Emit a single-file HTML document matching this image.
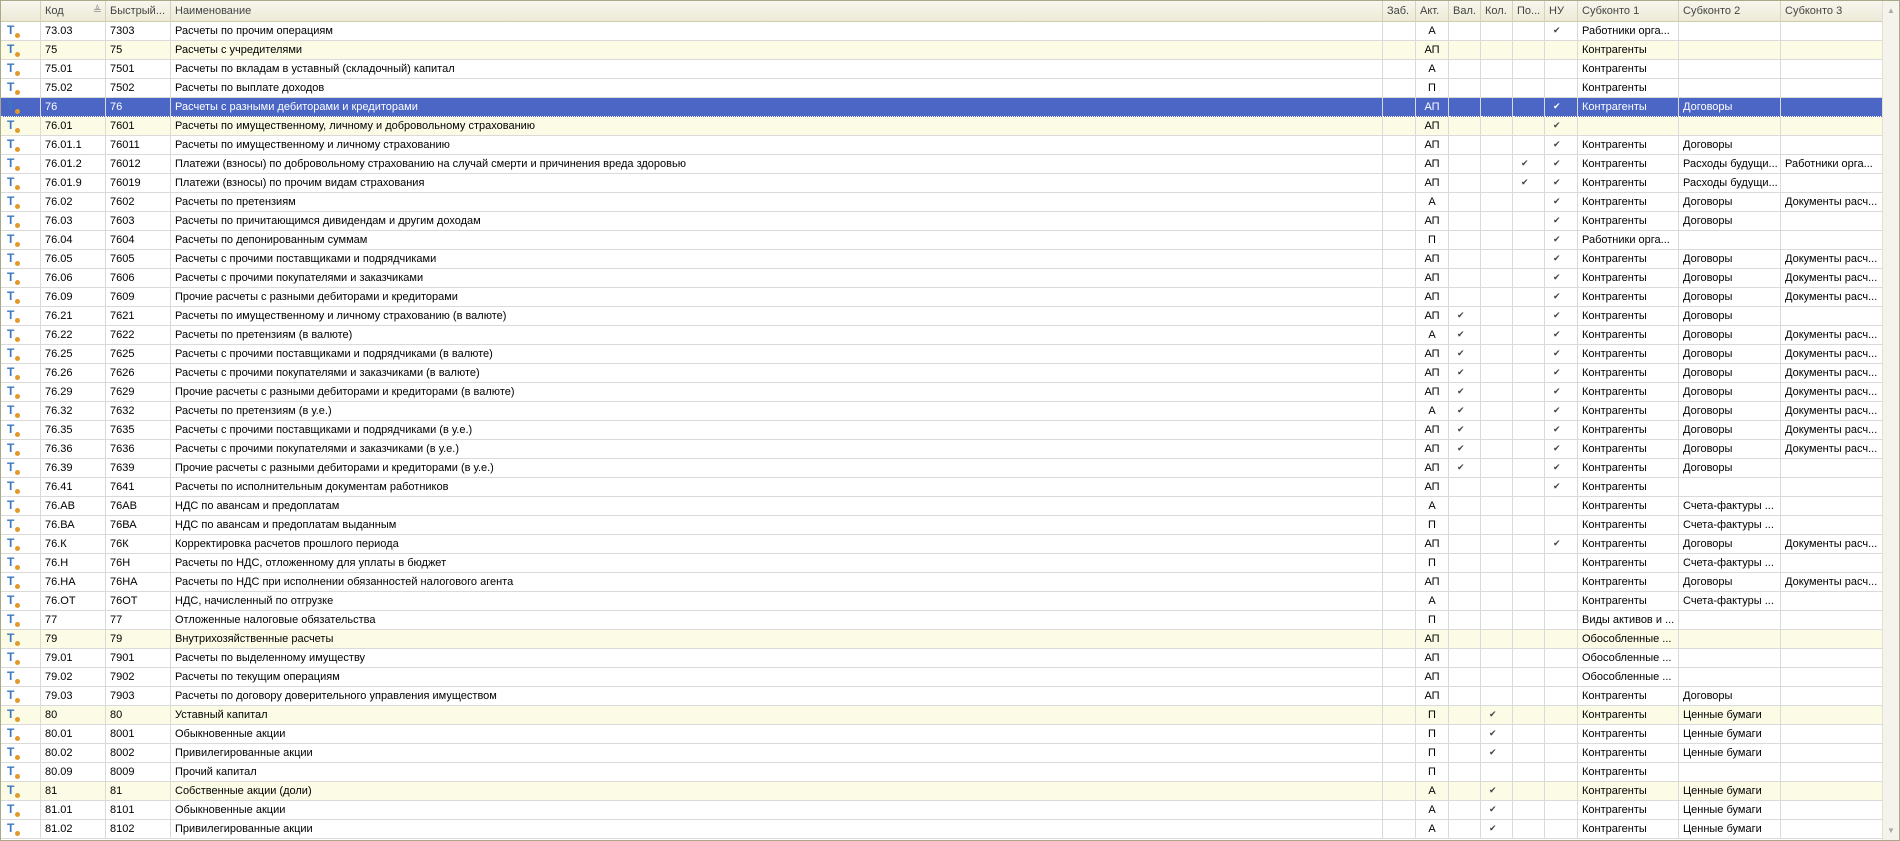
<!DOCTYPE html>
<html><head><meta charset="utf-8"><style>
html,body{margin:0;padding:0;width:1900px;height:841px;overflow:hidden;background:#fff;font-family:"Liberation Sans","DejaVu Sans",sans-serif;font-size:11px;color:#000}
.wrap{position:absolute;left:0;top:0;width:1900px;height:841px;border:1px solid #a9a98a;box-sizing:border-box;overflow:hidden}
table{border-collapse:separate;border-spacing:0;table-layout:fixed;position:absolute;left:0;top:0;width:1881px}
td,th{height:19px;border-right:1px solid #dadada;border-bottom:1px solid #dadada;padding:0 0 0 4px;white-space:nowrap;overflow:hidden;text-align:left;font-weight:normal;box-sizing:border-box;line-height:17px}
th{height:21px;line-height:20px;background:linear-gradient(#f8f7ee,#ece9d6);color:#444;border-right:1px solid #d6d2bc;border-bottom:1px solid #cfcbb3}
tr.y td{background:#fbfbe6}
tr.s td{background:#4b66c4;color:#fff;border-bottom:1px dotted #fff}
td.c{text-align:center;padding:0}
td.k{padding-left:8px;font-family:"DejaVu Sans",sans-serif;font-size:9px;color:#444}
tr.s td.k{color:#fff}
.i{position:relative;display:inline-block;width:14px;height:14px;vertical-align:middle}
.i b{position:absolute;left:0;top:-1px;font:bold 12px "Liberation Sans",sans-serif;color:#3b78c0;line-height:14px}
.i i{position:absolute;left:8px;top:9px;width:5px;height:5px;border-radius:50%;background:#e09a2a}
td.ic{padding-left:6px}
.sb{position:absolute;left:1881px;top:0;width:17px;height:839px;background:#f4f3ec;border-left:1px solid #e2e0d4}
.sb .u,.sb .d{position:absolute;left:4px;font-size:8px;color:#aaa}
</style></head><body><div class="wrap">
<table>
<colgroup><col style="width:40px"><col style="width:65px"><col style="width:65px"><col style="width:1212px"><col style="width:33px"><col style="width:33px"><col style="width:32px"><col style="width:32px"><col style="width:32px"><col style="width:33px"><col style="width:101px"><col style="width:102px"><col style="width:102px"></colgroup>
<tr><th></th><th>Код <span style="margin-left:26px;color:#999">≜</span></th><th>Быстрый...</th><th>Наименование</th><th>Заб.</th><th>Акт.</th><th>Вал.</th><th>Кол.</th><th>По...</th><th>НУ</th><th>Субконто 1</th><th>Субконто 2</th><th>Субконто 3</th></tr>
<tr><td class="ic"><span class="i"><b>T</b><i></i></span></td><td>73.03</td><td>7303</td><td>Расчеты по прочим операциям</td><td></td><td class="c">А</td><td></td><td></td><td></td><td class="k">✔</td><td>Работники орга...</td><td></td><td></td></tr>
<tr class="y"><td class="ic"><span class="i"><b>T</b><i></i></span></td><td>75</td><td>75</td><td>Расчеты с учредителями</td><td></td><td class="c">АП</td><td></td><td></td><td></td><td></td><td>Контрагенты</td><td></td><td></td></tr>
<tr><td class="ic"><span class="i"><b>T</b><i></i></span></td><td>75.01</td><td>7501</td><td>Расчеты по вкладам в уставный (складочный) капитал</td><td></td><td class="c">А</td><td></td><td></td><td></td><td></td><td>Контрагенты</td><td></td><td></td></tr>
<tr><td class="ic"><span class="i"><b>T</b><i></i></span></td><td>75.02</td><td>7502</td><td>Расчеты по выплате доходов</td><td></td><td class="c">П</td><td></td><td></td><td></td><td></td><td>Контрагенты</td><td></td><td></td></tr>
<tr class="s"><td class="ic"><span class="i"><b>T</b><i></i></span></td><td>76</td><td>76</td><td>Расчеты с разными дебиторами и кредиторами</td><td></td><td class="c">АП</td><td></td><td></td><td></td><td class="k">✔</td><td>Контрагенты</td><td>Договоры</td><td></td></tr>
<tr class="y"><td class="ic"><span class="i"><b>T</b><i></i></span></td><td>76.01</td><td>7601</td><td>Расчеты по имущественному, личному и добровольному страхованию</td><td></td><td class="c">АП</td><td></td><td></td><td></td><td class="k">✔</td><td></td><td></td><td></td></tr>
<tr><td class="ic"><span class="i"><b>T</b><i></i></span></td><td>76.01.1</td><td>76011</td><td>Расчеты по имущественному и личному страхованию</td><td></td><td class="c">АП</td><td></td><td></td><td></td><td class="k">✔</td><td>Контрагенты</td><td>Договоры</td><td></td></tr>
<tr><td class="ic"><span class="i"><b>T</b><i></i></span></td><td>76.01.2</td><td>76012</td><td>Платежи (взносы) по добровольному страхованию на случай смерти и причинения вреда здоровью</td><td></td><td class="c">АП</td><td></td><td></td><td class="k">✔</td><td class="k">✔</td><td>Контрагенты</td><td>Расходы будущи...</td><td>Работники орга...</td></tr>
<tr><td class="ic"><span class="i"><b>T</b><i></i></span></td><td>76.01.9</td><td>76019</td><td>Платежи (взносы) по прочим видам страхования</td><td></td><td class="c">АП</td><td></td><td></td><td class="k">✔</td><td class="k">✔</td><td>Контрагенты</td><td>Расходы будущи...</td><td></td></tr>
<tr><td class="ic"><span class="i"><b>T</b><i></i></span></td><td>76.02</td><td>7602</td><td>Расчеты по претензиям</td><td></td><td class="c">А</td><td></td><td></td><td></td><td class="k">✔</td><td>Контрагенты</td><td>Договоры</td><td>Документы расч...</td></tr>
<tr><td class="ic"><span class="i"><b>T</b><i></i></span></td><td>76.03</td><td>7603</td><td>Расчеты по причитающимся дивидендам и другим доходам</td><td></td><td class="c">АП</td><td></td><td></td><td></td><td class="k">✔</td><td>Контрагенты</td><td>Договоры</td><td></td></tr>
<tr><td class="ic"><span class="i"><b>T</b><i></i></span></td><td>76.04</td><td>7604</td><td>Расчеты по депонированным суммам</td><td></td><td class="c">П</td><td></td><td></td><td></td><td class="k">✔</td><td>Работники орга...</td><td></td><td></td></tr>
<tr><td class="ic"><span class="i"><b>T</b><i></i></span></td><td>76.05</td><td>7605</td><td>Расчеты с прочими поставщиками и подрядчиками</td><td></td><td class="c">АП</td><td></td><td></td><td></td><td class="k">✔</td><td>Контрагенты</td><td>Договоры</td><td>Документы расч...</td></tr>
<tr><td class="ic"><span class="i"><b>T</b><i></i></span></td><td>76.06</td><td>7606</td><td>Расчеты с прочими покупателями и заказчиками</td><td></td><td class="c">АП</td><td></td><td></td><td></td><td class="k">✔</td><td>Контрагенты</td><td>Договоры</td><td>Документы расч...</td></tr>
<tr><td class="ic"><span class="i"><b>T</b><i></i></span></td><td>76.09</td><td>7609</td><td>Прочие расчеты с разными дебиторами и кредиторами</td><td></td><td class="c">АП</td><td></td><td></td><td></td><td class="k">✔</td><td>Контрагенты</td><td>Договоры</td><td>Документы расч...</td></tr>
<tr><td class="ic"><span class="i"><b>T</b><i></i></span></td><td>76.21</td><td>7621</td><td>Расчеты по имущественному и личному страхованию (в валюте)</td><td></td><td class="c">АП</td><td class="k">✔</td><td></td><td></td><td class="k">✔</td><td>Контрагенты</td><td>Договоры</td><td></td></tr>
<tr><td class="ic"><span class="i"><b>T</b><i></i></span></td><td>76.22</td><td>7622</td><td>Расчеты по претензиям (в валюте)</td><td></td><td class="c">А</td><td class="k">✔</td><td></td><td></td><td class="k">✔</td><td>Контрагенты</td><td>Договоры</td><td>Документы расч...</td></tr>
<tr><td class="ic"><span class="i"><b>T</b><i></i></span></td><td>76.25</td><td>7625</td><td>Расчеты с прочими поставщиками и подрядчиками (в валюте)</td><td></td><td class="c">АП</td><td class="k">✔</td><td></td><td></td><td class="k">✔</td><td>Контрагенты</td><td>Договоры</td><td>Документы расч...</td></tr>
<tr><td class="ic"><span class="i"><b>T</b><i></i></span></td><td>76.26</td><td>7626</td><td>Расчеты с прочими покупателями и заказчиками (в валюте)</td><td></td><td class="c">АП</td><td class="k">✔</td><td></td><td></td><td class="k">✔</td><td>Контрагенты</td><td>Договоры</td><td>Документы расч...</td></tr>
<tr><td class="ic"><span class="i"><b>T</b><i></i></span></td><td>76.29</td><td>7629</td><td>Прочие расчеты с разными дебиторами и кредиторами (в валюте)</td><td></td><td class="c">АП</td><td class="k">✔</td><td></td><td></td><td class="k">✔</td><td>Контрагенты</td><td>Договоры</td><td>Документы расч...</td></tr>
<tr><td class="ic"><span class="i"><b>T</b><i></i></span></td><td>76.32</td><td>7632</td><td>Расчеты по претензиям (в у.е.)</td><td></td><td class="c">А</td><td class="k">✔</td><td></td><td></td><td class="k">✔</td><td>Контрагенты</td><td>Договоры</td><td>Документы расч...</td></tr>
<tr><td class="ic"><span class="i"><b>T</b><i></i></span></td><td>76.35</td><td>7635</td><td>Расчеты с прочими поставщиками и подрядчиками (в у.е.)</td><td></td><td class="c">АП</td><td class="k">✔</td><td></td><td></td><td class="k">✔</td><td>Контрагенты</td><td>Договоры</td><td>Документы расч...</td></tr>
<tr><td class="ic"><span class="i"><b>T</b><i></i></span></td><td>76.36</td><td>7636</td><td>Расчеты с прочими покупателями и заказчиками (в у.е.)</td><td></td><td class="c">АП</td><td class="k">✔</td><td></td><td></td><td class="k">✔</td><td>Контрагенты</td><td>Договоры</td><td>Документы расч...</td></tr>
<tr><td class="ic"><span class="i"><b>T</b><i></i></span></td><td>76.39</td><td>7639</td><td>Прочие расчеты с разными дебиторами и кредиторами (в у.е.)</td><td></td><td class="c">АП</td><td class="k">✔</td><td></td><td></td><td class="k">✔</td><td>Контрагенты</td><td>Договоры</td><td></td></tr>
<tr><td class="ic"><span class="i"><b>T</b><i></i></span></td><td>76.41</td><td>7641</td><td>Расчеты по исполнительным документам работников</td><td></td><td class="c">АП</td><td></td><td></td><td></td><td class="k">✔</td><td>Контрагенты</td><td></td><td></td></tr>
<tr><td class="ic"><span class="i"><b>T</b><i></i></span></td><td>76.АВ</td><td>76АВ</td><td>НДС по авансам и предоплатам</td><td></td><td class="c">А</td><td></td><td></td><td></td><td></td><td>Контрагенты</td><td>Счета-фактуры ...</td><td></td></tr>
<tr><td class="ic"><span class="i"><b>T</b><i></i></span></td><td>76.ВА</td><td>76ВА</td><td>НДС по авансам и предоплатам выданным</td><td></td><td class="c">П</td><td></td><td></td><td></td><td></td><td>Контрагенты</td><td>Счета-фактуры ...</td><td></td></tr>
<tr><td class="ic"><span class="i"><b>T</b><i></i></span></td><td>76.К</td><td>76К</td><td>Корректировка расчетов прошлого периода</td><td></td><td class="c">АП</td><td></td><td></td><td></td><td class="k">✔</td><td>Контрагенты</td><td>Договоры</td><td>Документы расч...</td></tr>
<tr><td class="ic"><span class="i"><b>T</b><i></i></span></td><td>76.Н</td><td>76Н</td><td>Расчеты по НДС, отложенному для уплаты в бюджет</td><td></td><td class="c">П</td><td></td><td></td><td></td><td></td><td>Контрагенты</td><td>Счета-фактуры ...</td><td></td></tr>
<tr><td class="ic"><span class="i"><b>T</b><i></i></span></td><td>76.НА</td><td>76НА</td><td>Расчеты по НДС при исполнении обязанностей налогового агента</td><td></td><td class="c">АП</td><td></td><td></td><td></td><td></td><td>Контрагенты</td><td>Договоры</td><td>Документы расч...</td></tr>
<tr><td class="ic"><span class="i"><b>T</b><i></i></span></td><td>76.ОТ</td><td>76ОТ</td><td>НДС, начисленный по отгрузке</td><td></td><td class="c">А</td><td></td><td></td><td></td><td></td><td>Контрагенты</td><td>Счета-фактуры ...</td><td></td></tr>
<tr><td class="ic"><span class="i"><b>T</b><i></i></span></td><td>77</td><td>77</td><td>Отложенные налоговые обязательства</td><td></td><td class="c">П</td><td></td><td></td><td></td><td></td><td>Виды активов и ...</td><td></td><td></td></tr>
<tr class="y"><td class="ic"><span class="i"><b>T</b><i></i></span></td><td>79</td><td>79</td><td>Внутрихозяйственные расчеты</td><td></td><td class="c">АП</td><td></td><td></td><td></td><td></td><td>Обособленные ...</td><td></td><td></td></tr>
<tr><td class="ic"><span class="i"><b>T</b><i></i></span></td><td>79.01</td><td>7901</td><td>Расчеты по выделенному имуществу</td><td></td><td class="c">АП</td><td></td><td></td><td></td><td></td><td>Обособленные ...</td><td></td><td></td></tr>
<tr><td class="ic"><span class="i"><b>T</b><i></i></span></td><td>79.02</td><td>7902</td><td>Расчеты по текущим операциям</td><td></td><td class="c">АП</td><td></td><td></td><td></td><td></td><td>Обособленные ...</td><td></td><td></td></tr>
<tr><td class="ic"><span class="i"><b>T</b><i></i></span></td><td>79.03</td><td>7903</td><td>Расчеты по договору доверительного управления имуществом</td><td></td><td class="c">АП</td><td></td><td></td><td></td><td></td><td>Контрагенты</td><td>Договоры</td><td></td></tr>
<tr class="y"><td class="ic"><span class="i"><b>T</b><i></i></span></td><td>80</td><td>80</td><td>Уставный капитал</td><td></td><td class="c">П</td><td></td><td class="k">✔</td><td></td><td></td><td>Контрагенты</td><td>Ценные бумаги</td><td></td></tr>
<tr><td class="ic"><span class="i"><b>T</b><i></i></span></td><td>80.01</td><td>8001</td><td>Обыкновенные акции</td><td></td><td class="c">П</td><td></td><td class="k">✔</td><td></td><td></td><td>Контрагенты</td><td>Ценные бумаги</td><td></td></tr>
<tr><td class="ic"><span class="i"><b>T</b><i></i></span></td><td>80.02</td><td>8002</td><td>Привилегированные акции</td><td></td><td class="c">П</td><td></td><td class="k">✔</td><td></td><td></td><td>Контрагенты</td><td>Ценные бумаги</td><td></td></tr>
<tr><td class="ic"><span class="i"><b>T</b><i></i></span></td><td>80.09</td><td>8009</td><td>Прочий капитал</td><td></td><td class="c">П</td><td></td><td></td><td></td><td></td><td>Контрагенты</td><td></td><td></td></tr>
<tr class="y"><td class="ic"><span class="i"><b>T</b><i></i></span></td><td>81</td><td>81</td><td>Собственные акции (доли)</td><td></td><td class="c">А</td><td></td><td class="k">✔</td><td></td><td></td><td>Контрагенты</td><td>Ценные бумаги</td><td></td></tr>
<tr><td class="ic"><span class="i"><b>T</b><i></i></span></td><td>81.01</td><td>8101</td><td>Обыкновенные акции</td><td></td><td class="c">А</td><td></td><td class="k">✔</td><td></td><td></td><td>Контрагенты</td><td>Ценные бумаги</td><td></td></tr>
<tr><td class="ic"><span class="i"><b>T</b><i></i></span></td><td>81.02</td><td>8102</td><td>Привилегированные акции</td><td></td><td class="c">А</td><td></td><td class="k">✔</td><td></td><td></td><td>Контрагенты</td><td>Ценные бумаги</td><td></td></tr>
</table>
<div class="sb"><span class="u" style="top:5px">▲</span><span class="d" style="bottom:5px">▼</span></div>
</div></body></html>
